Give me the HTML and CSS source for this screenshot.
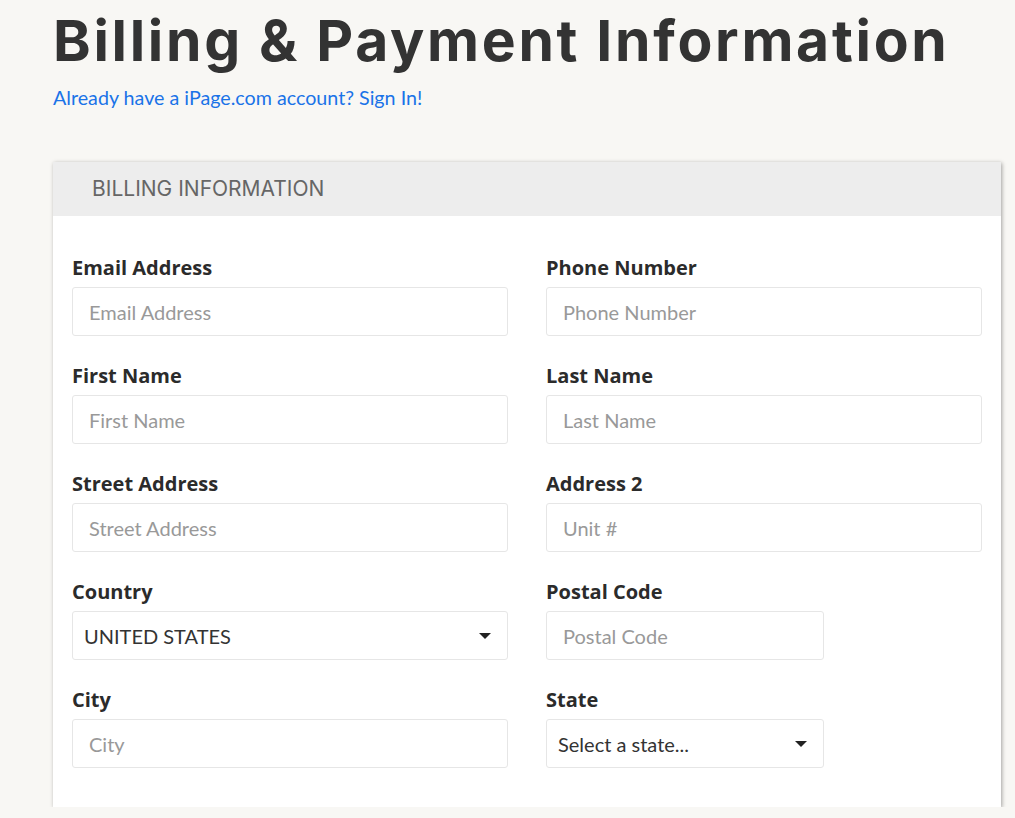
FILE: index.html
```html
<!DOCTYPE html>
<html lang="en">
<head>
  <meta charset="UTF-8">
  <meta name="viewport" content="width=device-width, initial-scale=1.0">
  <title>Billing &amp; Payment Information</title>
  <link rel="stylesheet" href="styles.css">
</head>
<body>
  <div class="page">
    <h1 class="page-title">Billing &amp; Payment Information</h1>
    <a class="signin-link" href="#">Already have a iPage.com account? Sign In!</a>

    <!-- Billing card -->
    <div class="card">
      <div class="card-header">BILLING INFORMATION</div>
      <div class="card-body">
        <div class="form-grid">
          <div class="field">
            <label for="email">Email Address</label>
            <input type="text" id="email" placeholder="Email Address">
          </div>
          <div class="field">
            <label for="phone">Phone Number</label>
            <input type="text" id="phone" placeholder="Phone Number">
          </div>

          <div class="field">
            <label for="first">First Name</label>
            <input type="text" id="first" placeholder="First Name">
          </div>
          <div class="field">
            <label for="last">Last Name</label>
            <input type="text" id="last" placeholder="Last Name">
          </div>

          <div class="field">
            <label for="street">Street Address</label>
            <input type="text" id="street" placeholder="Street Address">
          </div>
          <div class="field">
            <label for="addr2">Address 2</label>
            <input type="text" id="addr2" placeholder="Unit #">
          </div>

          <div class="field">
            <label for="country">Country</label>
            <div class="select-wrap">
              <select id="country">
                <option>UNITED STATES</option>
              </select>
            </div>
          </div>
          <div class="field short">
            <label for="postal">Postal Code</label>
            <input type="text" id="postal" placeholder="Postal Code">
          </div>

          <div class="field">
            <label for="city">City</label>
            <input type="text" id="city" placeholder="City">
          </div>
          <div class="field short">
            <label for="state">State</label>
            <div class="select-wrap">
              <select id="state">
                <option>Select a state...</option>
              </select>
            </div>
          </div>
        </div>
      </div>
    </div>
  </div>
</body>
</html>
```

FILE: styles.css
```css
body {
  margin: 0;
  background-color: #f8f7f4;
  font-family: Lato, "Open Sans", sans-serif;
  color: #333;
}
.page {
  padding: 0 14px 0 53px;
}
.page-title {
  margin: 0;
  padding-top: 5px;
  font-family: Inter, "Open Sans", sans-serif;
  font-weight: 700;
  font-size: 57px;
  line-height: 72px;
  color: #333;
  letter-spacing: 2.7px;
  white-space: nowrap;
}
.signin-link {
  display: inline-block;
  margin-top: 9px;
  font-size: 19.7px;
  line-height: 24px;
  color: #1a73e8;
  text-decoration: none;
}

/* Card */
.card {
  margin-top: 52px;
  width: 948px;
  background: #fff;
  box-shadow: 1px 1px 4px rgba(0, 0, 0, 0.35);
}
.card-header {
  height: 54px;
  line-height: 54px;
  padding-left: 39px;
  background-color: #ededed;
  font-family: Inter, "Open Sans", sans-serif;
  font-size: 21px;
  color: #666;
}
.card-body {
  padding: 41px 19px 10px;
}
.form-grid {
  display: grid;
  grid-template-columns: 436px 436px;
  column-gap: 38px;
}
.field {
  margin-bottom: 29px;
}
.field.short input,
.field.short .select-wrap {
  width: 278px;
}
label {
  display: block;
  margin-bottom: 9px;
  font-family: "Open Sans", sans-serif;
  font-weight: 700;
  font-size: 20px;
  line-height: 21px;
  color: #2b2b2b;
}
input,
select {
  box-sizing: border-box;
  width: 100%;
  height: 49px;
  border: 1px solid #e6e6e6;
  border-radius: 3px;
  background: #fff;
  font-family: Lato, sans-serif;
  font-size: 20px;
  color: #333;
  outline: none;
}
input {
  padding: 0 16px;
}
input::placeholder {
  color: #999;
}
.select-wrap {
  position: relative;
}
select {
  appearance: none;
  -webkit-appearance: none;
  padding: 0 40px 0 11px;
}
.select-wrap::after {
  content: "";
  position: absolute;
  right: 17px;
  top: 22px;
  border-left: 6px solid transparent;
  border-right: 6px solid transparent;
  border-top: 6px solid #222;
  pointer-events: none;
}
```
